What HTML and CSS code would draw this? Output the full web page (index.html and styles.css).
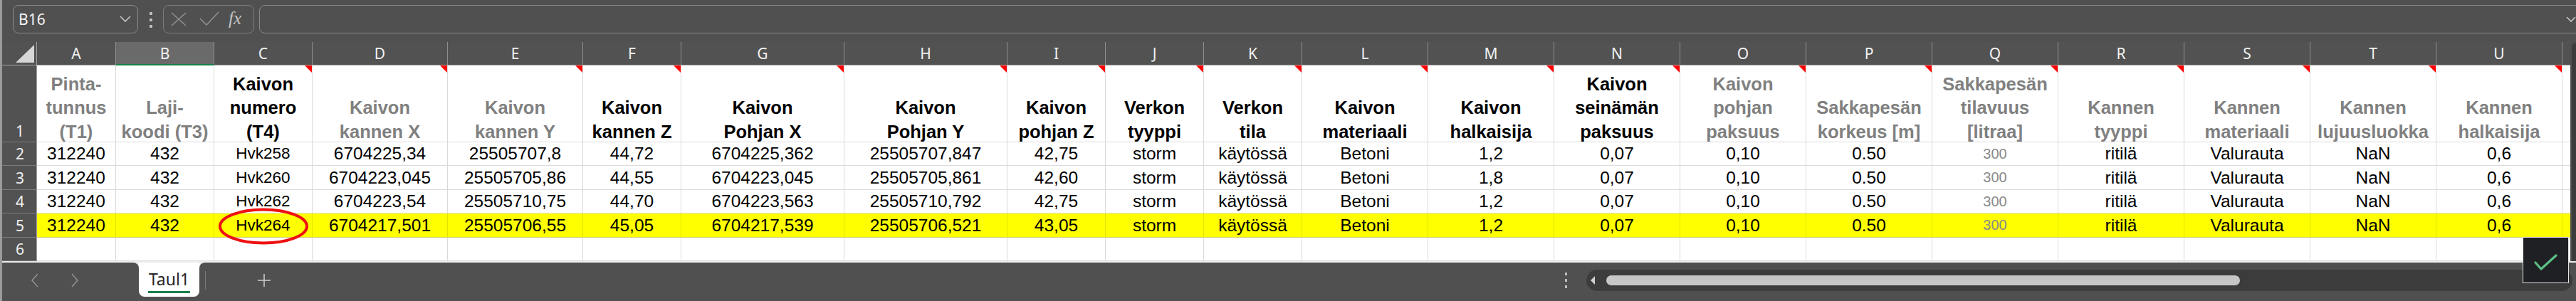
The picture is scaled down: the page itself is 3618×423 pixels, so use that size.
FILE: index.html
```html
<!DOCTYPE html>
<html lang="fi">
<head>
<meta charset="utf-8">
<title>Taul1</title>
<link rel="stylesheet" href="styles.css">
</head>
<body>
<div class="app">
  <div class="fbar">
    <div class="namebox"><span>B16</span><svg class="chev" width="16" height="10" viewBox="0 0 16 10"><polyline points="1,1 8,8 15,1" fill="none" stroke="#c4c4c4" stroke-width="1.6"/></svg></div>
    <div class="vdots"><i></i><i></i><i></i></div>
    <div class="fxbox">
      <svg class="ico-x" width="22" height="20" viewBox="0 0 22 20"><path d="M1 1 L21 19 M21 1 L1 19" stroke="#8e8e8e" stroke-width="1.6" fill="none"/></svg>
      <svg class="ico-ok" width="28" height="22" viewBox="0 0 28 22"><path d="M1 11 L10 20 L27 2" stroke="#8e8e8e" stroke-width="1.6" fill="none"/></svg>
      <span class="fx">fx</span>
    </div>
    <div class="finput"><svg class="chev" width="14" height="9" viewBox="0 0 14 9"><polyline points="1,1 7,7 13,1" fill="none" stroke="#c4c4c4" stroke-width="1.6"/></svg></div>
  </div>

  <div class="main">
    <div class="sheet">
      <div class="corner"><svg width="49" height="32" viewBox="0 0 49 32"><polygon points="45,4 45,29 19,29" fill="#d6d6d6"/></svg></div>
      <div class="ch">A</div><div class="ch sel">B</div><div class="ch">C</div><div class="ch">D</div><div class="ch">E</div><div class="ch">F</div><div class="ch">G</div><div class="ch">H</div><div class="ch">I</div><div class="ch">J</div><div class="ch">K</div><div class="ch">L</div><div class="ch">M</div><div class="ch">N</div><div class="ch">O</div><div class="ch">P</div><div class="ch">Q</div><div class="ch">R</div><div class="ch">S</div><div class="ch">T</div><div class="ch">U</div><div class="ch last"></div>

      <div class="rh bot">1</div>
      <div class="c h g"><span>Pinta-<br>tunnus<br>(T1)</span></div>
      <div class="c h g"><span>Laji-<br>koodi (T3)</span></div>
      <div class="c h cm"><span>Kaivon<br>numero<br>(T4)</span></div>
      <div class="c h g cm"><span>Kaivon<br>kannen X</span></div>
      <div class="c h g cm"><span>Kaivon<br>kannen Y</span></div>
      <div class="c h cm"><span>Kaivon<br>kannen Z</span></div>
      <div class="c h cm"><span>Kaivon<br>Pohjan X</span></div>
      <div class="c h cm"><span>Kaivon<br>Pohjan Y</span></div>
      <div class="c h cm"><span>Kaivon<br>pohjan Z</span></div>
      <div class="c h cm"><span>Verkon<br>tyyppi</span></div>
      <div class="c h cm"><span>Verkon<br>tila</span></div>
      <div class="c h cm"><span>Kaivon<br>materiaali</span></div>
      <div class="c h cm"><span>Kaivon<br>halkaisija</span></div>
      <div class="c h cm"><span>Kaivon<br>seinämän<br>paksuus</span></div>
      <div class="c h g cm"><span>Kaivon<br>pohjan<br>paksuus</span></div>
      <div class="c h g cm"><span>Sakkapesän<br>korkeus [m]</span></div>
      <div class="c h g cm"><span>Sakkapesän<br>tilavuus<br>[litraa]</span></div>
      <div class="c h g cm"><span>Kannen<br>tyyppi</span></div>
      <div class="c h g cm"><span>Kannen<br>materiaali</span></div>
      <div class="c h g cm"><span>Kannen<br>lujuusluokka</span></div>
      <div class="c h g cm"><span>Kannen<br>halkaisija</span></div>
      <div class="c v"></div>

      <div class="rh">2</div>
      <div class="c">312240</div><div class="c">432</div><div class="c id">Hvk258</div><div class="c">6704225,34</div><div class="c">25505707,8</div><div class="c">44,72</div><div class="c">6704225,362</div><div class="c">25505707,847</div><div class="c">42,75</div><div class="c">storm</div><div class="c">käytössä</div><div class="c">Betoni</div><div class="c">1,2</div><div class="c">0,07</div><div class="c">0,10</div><div class="c">0.50</div><div class="c q">300</div><div class="c">ritilä</div><div class="c">Valurauta</div><div class="c">NaN</div><div class="c">0,6</div><div class="c v"></div>

      <div class="rh">3</div>
      <div class="c">312240</div><div class="c">432</div><div class="c id">Hvk260</div><div class="c">6704223,045</div><div class="c">25505705,86</div><div class="c">44,55</div><div class="c">6704223,045</div><div class="c">25505705,861</div><div class="c">42,60</div><div class="c">storm</div><div class="c">käytössä</div><div class="c">Betoni</div><div class="c">1,8</div><div class="c">0,07</div><div class="c">0,10</div><div class="c">0.50</div><div class="c q">300</div><div class="c">ritilä</div><div class="c">Valurauta</div><div class="c">NaN</div><div class="c">0,6</div><div class="c v"></div>

      <div class="rh">4</div>
      <div class="c">312240</div><div class="c">432</div><div class="c id">Hvk262</div><div class="c">6704223,54</div><div class="c">25505710,75</div><div class="c">44,70</div><div class="c">6704223,563</div><div class="c">25505710,792</div><div class="c">42,75</div><div class="c">storm</div><div class="c">käytössä</div><div class="c">Betoni</div><div class="c">1,2</div><div class="c">0,07</div><div class="c">0,10</div><div class="c">0.50</div><div class="c q">300</div><div class="c">ritilä</div><div class="c">Valurauta</div><div class="c">NaN</div><div class="c">0,6</div><div class="c v"></div>

      <div class="rh">5</div>
      <div class="c y">312240</div><div class="c y">432</div><div class="c y id">Hvk264</div><div class="c y">6704217,501</div><div class="c y">25505706,55</div><div class="c y">45,05</div><div class="c y">6704217,539</div><div class="c y">25505706,521</div><div class="c y">43,05</div><div class="c y">storm</div><div class="c y">käytössä</div><div class="c y">Betoni</div><div class="c y">1,2</div><div class="c y">0,07</div><div class="c y">0,10</div><div class="c y">0.50</div><div class="c y q">300</div><div class="c y">ritilä</div><div class="c y">Valurauta</div><div class="c y">NaN</div><div class="c y">0,6</div><div class="c y v"></div>

      <div class="rh">6</div>
      <div class="c"></div><div class="c"></div><div class="c"></div><div class="c"></div><div class="c"></div><div class="c"></div><div class="c"></div><div class="c"></div><div class="c"></div><div class="c"></div><div class="c"></div><div class="c"></div><div class="c"></div><div class="c"></div><div class="c"></div><div class="c"></div><div class="c"></div><div class="c"></div><div class="c"></div><div class="c"></div><div class="c"></div><div class="c v"></div>
    </div>
    <div class="vscroll"><div class="vtrack"></div></div>
  </div>

  <div class="tabbar">
    <div class="tb-left">
      <svg class="nav" width="10" height="20" viewBox="0 0 10 20"><polyline points="9,1 1,10 9,19" fill="none" stroke="#929292" stroke-width="1.5"/></svg>
      <svg class="nav" width="10" height="20" viewBox="0 0 10 20"><polyline points="1,1 9,10 1,19" fill="none" stroke="#929292" stroke-width="1.5"/></svg>
    </div>
    <div class="tabwrap"><div class="tab"><span>Taul1</span></div></div>
    <div class="tb-right">
      <div class="sep"></div>
      <svg class="plus" width="18" height="18" viewBox="0 0 18 18"><path d="M9 0 V18 M0 9 H18" stroke="#cfcfcf" stroke-width="1.5"/></svg>
      <div class="spacer"></div>
      <div class="hdots"><i></i><i></i><i></i></div>
      <div class="htrack">
        <svg class="harrow" width="6" height="12" viewBox="0 0 6 12"><polygon points="6,0 0,6 6,12" fill="#cfcfcf"/></svg>
        <div class="thumb"></div>
      </div>
    </div>
  </div>

  <svg class="ring" width="132" height="56" viewBox="0 0 132 56"><ellipse cx="66" cy="27" rx="61" ry="23.5" fill="none" stroke="#ee1111" stroke-width="4"/></svg>
  <div class="toast"><svg width="34" height="24" viewBox="0 0 34 24"><path d="M2 12 L10 21 L31 2" fill="none" stroke="#5cbf86" stroke-width="3.2" stroke-linecap="round" stroke-linejoin="round"/></svg></div>
</div>
</body>
</html>
```

FILE: styles.css
```css
* { box-sizing: border-box; margin: 0; padding: 0; }
html, body { width: 3618px; height: 423px; overflow: hidden; background: #505050; }
body { font-family: "Noto Sans", "Open Sans", sans-serif; }

.app {
  position: relative;
  width: 3618px;
  height: 423px;
  border-left: 3px solid #9b9b9b;
  background: #505050;
  overflow: hidden;
}

/* formula bar */
.fbar { height: 59px; display: flex; align-items: flex-start; padding-top: 7px; }
.namebox {
  flex: none; margin-left: 15px; width: 176px; height: 40px;
  border: 1px solid #8a8a8a; border-radius: 8px;
  display: flex; align-items: center; justify-content: space-between;
  padding: 0 9px 0 7px; color: #f4f4f4; font-size: 21px;
}
.vdots { flex: none; margin-left: 16px; margin-top: 10px; display: flex; flex-direction: column; gap: 5px; }
.vdots i { display: block; width: 4px; height: 4px; background: #c2c2c2; border-radius: 1px; }
.fxbox {
  flex: none; margin-left: 15px; width: 128px; height: 40px;
  border: 1px solid #7e7e7e; border-radius: 8px;
  display: flex; align-items: center; padding-left: 10px;
}
.ico-x { margin-right: 18px; }
.ico-ok { margin-right: 13px; margin-top: -2px; }
.fx { font-family: "Liberation Serif", serif; font-style: italic; font-size: 25px; color: #c4c4c4; margin-top: -3px; }
.finput {
  margin-left: 7px; flex: 1; height: 40px; margin-right: -14px;
  border: 1px solid #8a8a8a; border-radius: 8px;
  display: flex; align-items: center; justify-content: flex-end; padding-right: 13px;
}

/* sheet */
.main { display: flex; }
.sheet {
  flex: none;
  display: grid;
  grid-template-columns: 49px 111px 138px 138px 190px 190px 138px 229px 229px 138px 138px 138px repeat(10, 177px) 11px;
  grid-template-rows: 33px 108px 33px 34px 33px 34px 33px;
}
.corner { background: #525252; border-bottom: 1px solid #a3a3a3; border-right: 1px solid #a3a3a3; }
.corner svg { display: block; }
.ch {
  background: #525252; color: #f2f2f2; font-size: 21px;
  display: flex; align-items: center; justify-content: center;
  border-right: 1px solid #8f8f8f; border-bottom: 1px solid #a3a3a3;
}
.ch.sel { background: #6a6a6a; border-bottom: 2px solid #17804a; }
.ch.last { border-right: none; }
.rh {
  background: #525252; color: #f0f0f0; font-size: 21px;
  display: flex; align-items: center; justify-content: center;
  border-right: 1px solid #a3a3a3; border-bottom: 1px solid #7c7c7c;
  padding-left: 2px;
}
.rh.bot { align-items: flex-end; padding-bottom: 1px; }

.c {
  position: relative; background: #fff; color: #000;
  font-family: "Liberation Sans", Arial, sans-serif; font-size: 24.5px;
  display: flex; align-items: center; justify-content: center;
  white-space: nowrap; overflow: hidden;
  border-right: 1px solid #dadada; border-bottom: 1px solid #dadada;
}
.c.v { border-right: none; }
.c.id { font-size: 22.5px; }
.c.q { font-size: 20px; color: #8a8a8a; }
.c.h {
  font-weight: bold; font-size: 25.5px; line-height: 33.3px;
  align-items: flex-end; text-align: center;
}
.c.h span { margin-bottom: -3px; }
.c.g { color: #808080; }
.c.cm::after {
  content: ""; position: absolute; top: 0; right: 0;
  border-top: 10px solid #ff0000; border-left: 10px solid transparent;
}
.c.y { background: #ffff00; border-right-color: #e3e300; border-bottom-color: #cfcf6a; }

.vscroll { flex: none; width: 8px; background: #505050; padding-top: 1px; }
.vtrack { margin-left: 2px; height: 100%; background: #3c3c3c; border-radius: 6px 0 0 0; }

/* tab bar */
.tabbar { display: flex; height: 56px; background: #ececec; padding-top: 2px; }
.tb-left {
  flex: none; width: 192px; background: #505050; border-top-right-radius: 8px;
  display: flex; align-items: center; padding-left: 41px; gap: 46px; padding-bottom: 4px;
}
.tabwrap { flex: none; width: 85px; background: #505050; }
.tab {
  height: 48px; background: #fff; border-radius: 0 0 8px 8px;
  display: flex; justify-content: center; align-items: center; padding-top: 2px;
}
.tab span {
  font-size: 23px; color: #262626; line-height: 30px;
  border-bottom: 3px solid #17804a; padding: 0 1px 2px;
}
.tb-right {
  flex: 1; background: #505050; border-top-left-radius: 8px;
  display: flex; align-items: center; padding-bottom: 4px;
}
.sep { flex: none; width: 1px; height: 26px; background: #7a7a7a; margin-left: 8px; }
.plus { flex: none; margin-left: 73px; }
.spacer { flex: 1; }
.hdots { flex: none; display: flex; flex-direction: column; gap: 5px; margin-right: 27px; }
.hdots i { display: block; width: 3px; height: 4px; background: #bdbdbd; }
.htrack {
  flex: none; width: 1385px; height: 30px; margin-right: 5px;
  background: #3c3c3c; border-radius: 15px;
  display: flex; align-items: center; padding-left: 6px;
}
.harrow { margin-right: 16px; }
.thumb { width: 890px; height: 14px; background: #c6c6c6; border-radius: 7px; }

/* overlays */
.ring { position: absolute; left: 301px; top: 291px; }
.toast {
  position: absolute; left: 3540px; top: 333px; width: 65px; height: 65px;
  background: #1f2024; border: 1px solid #e4e4e4;
  display: flex; align-items: center; justify-content: center; padding-top: 6px;
}
```
